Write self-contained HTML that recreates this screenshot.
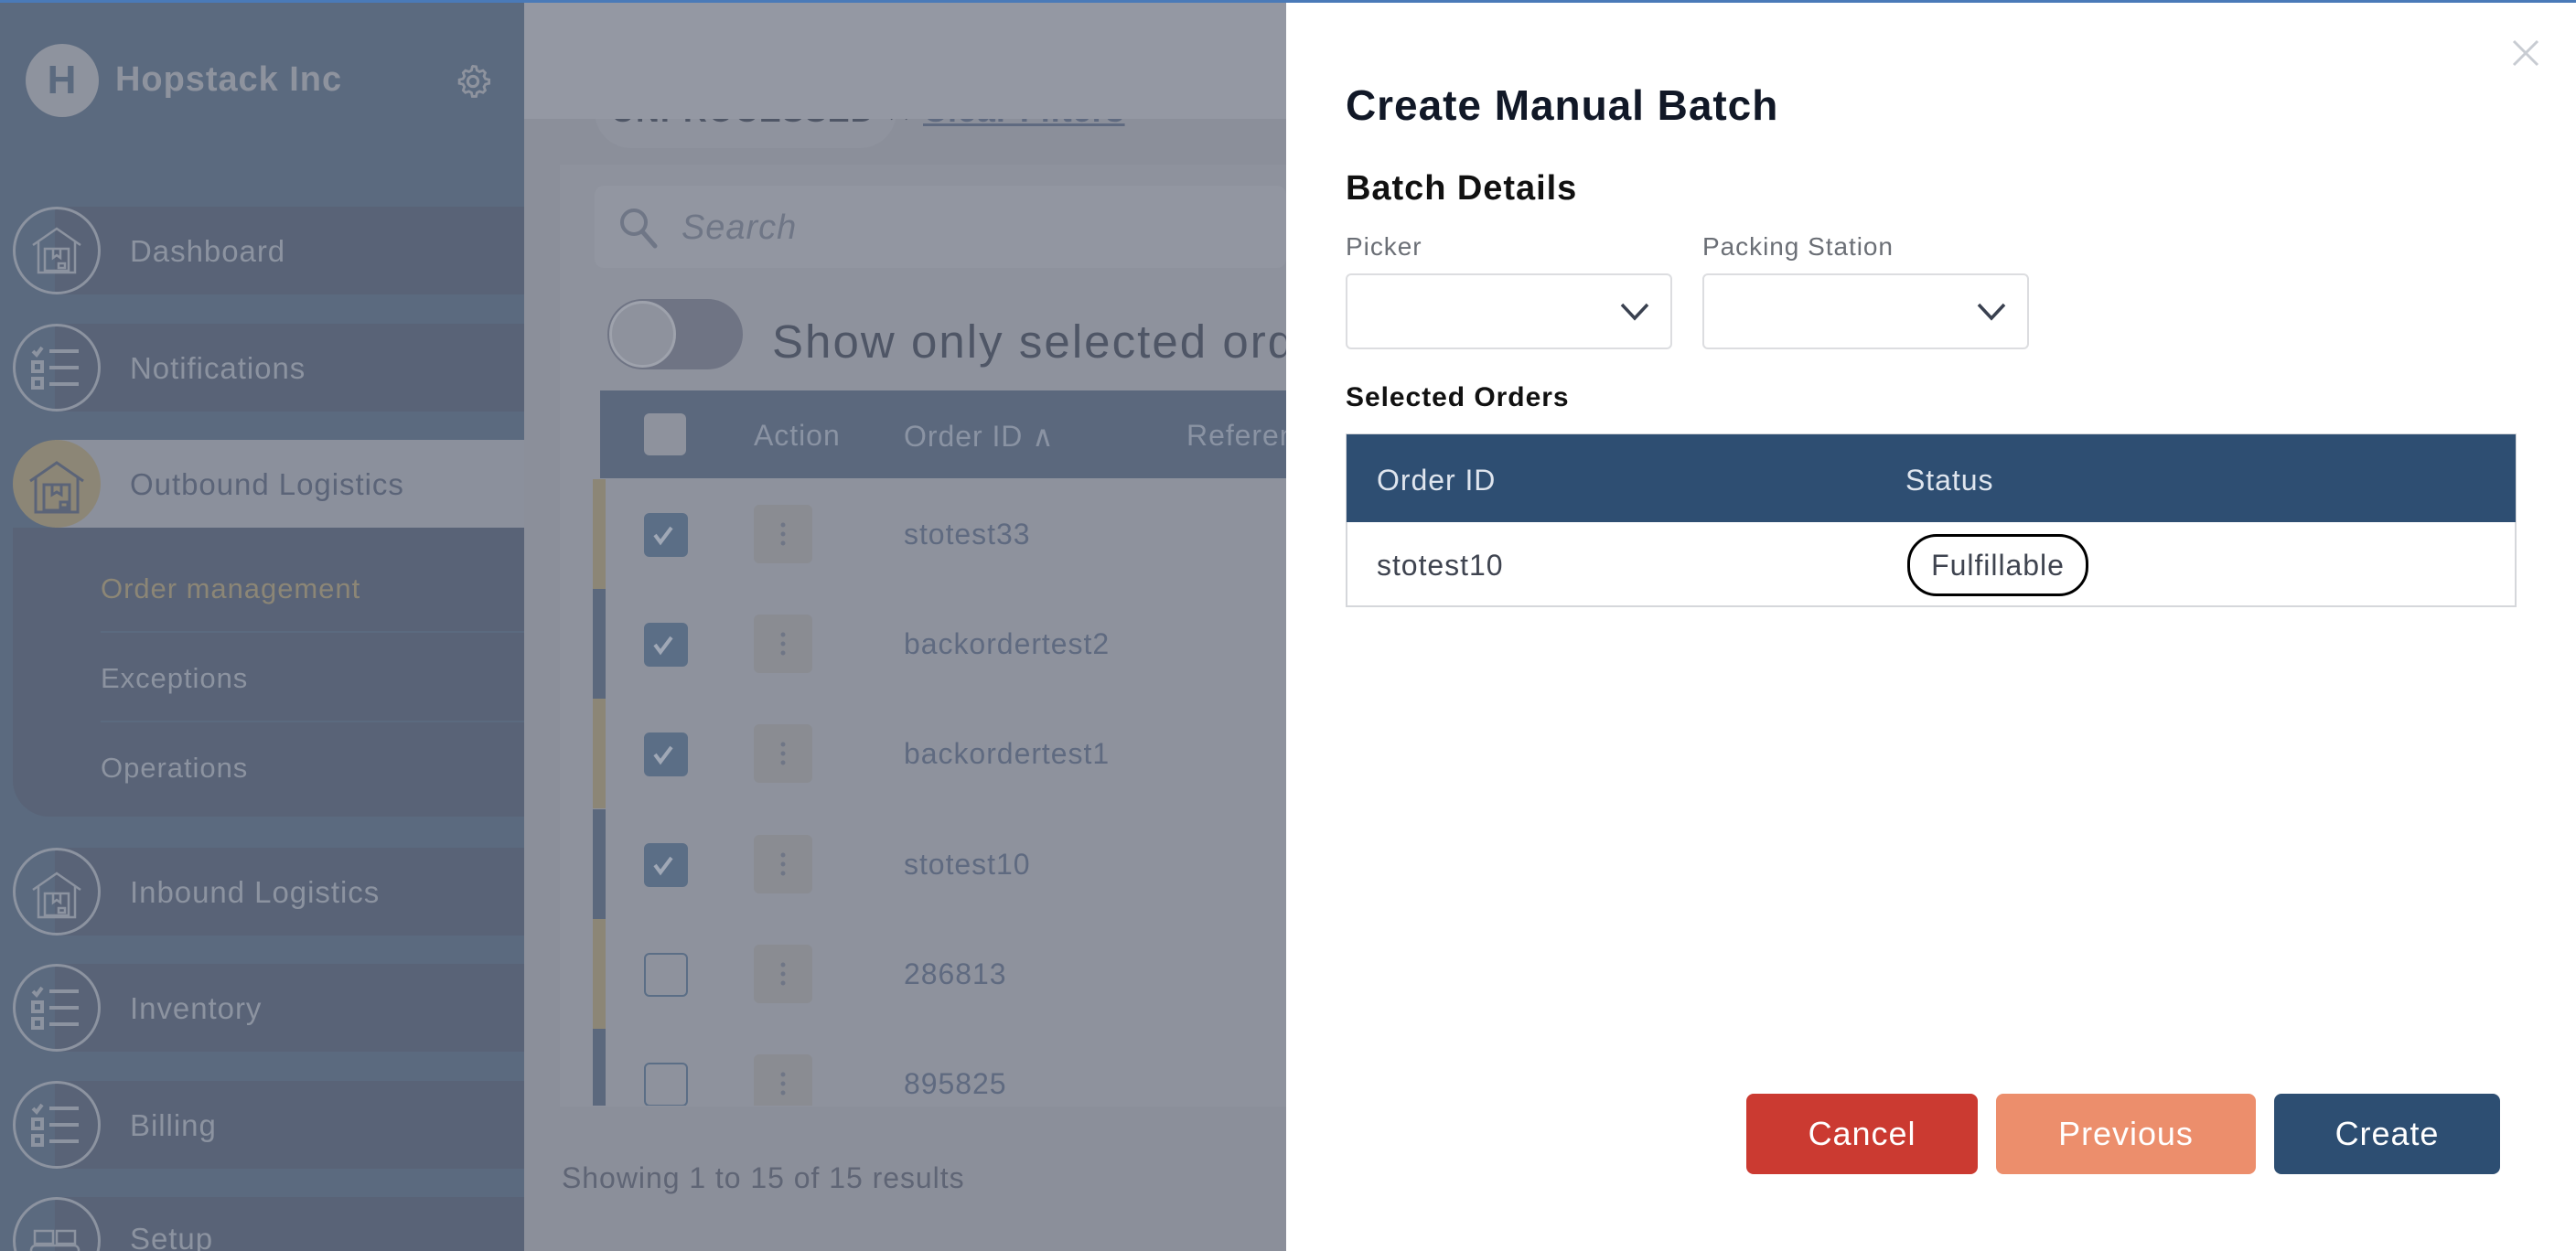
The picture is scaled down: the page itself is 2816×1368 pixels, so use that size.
<!DOCTYPE html>
<html style="width:2816px;height:1368px;overflow:hidden"><head><meta charset="utf-8"><style>
*{margin:0;padding:0;box-sizing:border-box}
body{width:2816px;height:1368px;overflow:hidden;position:relative;background:#8b8f9a;font-family:"Liberation Sans",sans-serif;letter-spacing:0.06em}
#wrap{position:absolute;left:0;top:0;width:2816px;height:1368px;overflow:hidden}
.a{position:absolute}
.side{left:0;top:0;width:573px;height:1368px;background:#5b6a7f;overflow:hidden}
.band{position:absolute;left:60px;width:513px;height:96px;background:#596377}
.circ{position:absolute;left:14px;width:96px;height:96px;border-radius:50%;border:3px solid #8c93a0}
.nt{position:absolute;left:142px;font-size:33px;color:#8c93a0;line-height:1}
.row{position:absolute;left:648px;width:758px;height:120px}
.stripe{position:absolute;left:0;top:0;width:14px;height:120px}
.cb{position:absolute;left:56px;top:37px;width:48px;height:48px;border-radius:6px}
.cb.on{background:#5b6e86}
.cb.off{border:2px solid #5b6e86}
.act{position:absolute;left:176px;top:28px;width:64px;height:64px;border-radius:6px;background:#8a8c92}
.rid{position:absolute;left:340px;top:44px;font-size:32px;color:#5f6a80;line-height:1}
.btn{position:absolute;top:1196px;height:88px;border-radius:8px;color:#fff;font-size:36px;display:flex;align-items:center;justify-content:center}
</style></head><body><div id="wrap">
<div class="a" style="left:0;top:0;width:2816px;height:3px;background:#4a7ab8;z-index:9"></div>
<div class="a" style="left:650px;top:60px;width:330px;height:102px;border-radius:40px;background:#8f939e"></div>
<div class="a" style="left:668px;top:100px;font-size:36px;color:#4f5666;font-weight:bold">UNPROCESSED ✕</div>
<div class="a" style="left:1009px;top:100px;font-size:36px;color:#5f6a80;text-decoration:underline;font-weight:bold">Clear Filters</div>
<div class="a" style="left:573px;top:0;width:833px;height:130px;background:#9498a3;z-index:2"></div>
<div class="a" style="left:612px;top:180px;width:794px;height:1030px;background:#8e929d"></div>
<div class="a" style="left:650px;top:203px;width:756px;height:90px;border-radius:10px;background:#9296a1"></div>
<svg class="a" style="left:676px;top:226px" width="44" height="46" viewBox="0 0 44 46"><circle cx="17" cy="17" r="13" fill="none" stroke="#6f7686" stroke-width="4"/><path d="M26 27L40 43" stroke="#6f7686" stroke-width="5" stroke-linecap="round"/></svg>
<div class="a" style="left:745px;top:228px;font-size:38px;color:#6f7686;font-style:italic">Search</div>
<div class="a" style="left:664px;top:327px;width:148px;height:77px;border-radius:40px;background:#6f7484"></div>
<div class="a" style="left:666px;top:329px;width:73px;height:73px;border-radius:50%;background:#8e929d;border:3px solid #9ea2ac"></div>
<div class="a" style="left:844px;top:344px;font-size:51px;color:#4f5666;white-space:nowrap;letter-spacing:0.04em">Show only selected orders</div>
<div class="a" style="left:656px;top:427px;width:750px;height:96px;background:#5b687d"></div>
<div class="a" style="left:704px;top:452px;width:46px;height:46px;border-radius:6px;background:#8e929d"></div>
<div class="a" style="left:824px;top:458px;font-size:32px;color:#8a93a3">Action</div>
<div class="a" style="left:988px;top:458px;font-size:32px;color:#8a93a3">Order ID ∧</div>
<div class="a" style="left:1297px;top:458px;font-size:32px;color:#8a93a3;white-space:nowrap">Reference</div>

<div class="row" style="top:524px"><div class="stripe" style="background:#8c8676"></div><div class="cb on"></div><div class="act"></div><div class="rid">stotest33</div></div>
<div class="row" style="top:644px"><div class="stripe" style="background:#5b687d"></div><div class="cb on"></div><div class="act"></div><div class="rid">backordertest2</div></div>
<div class="row" style="top:764px"><div class="stripe" style="background:#8c8676"></div><div class="cb on"></div><div class="act"></div><div class="rid">backordertest1</div></div>
<div class="row" style="top:885px"><div class="stripe" style="background:#5b687d"></div><div class="cb on"></div><div class="act"></div><div class="rid">stotest10</div></div>
<div class="row" style="top:1005px"><div class="stripe" style="background:#8c8676"></div><div class="cb off"></div><div class="act"></div><div class="rid">286813</div></div>
<div class="row" style="top:1125px;height:84px;overflow:hidden"><div class="stripe" style="background:#5b687d"></div><div class="cb off"></div><div class="act"></div><div class="rid">895825</div></div>
<div class="a" style="left:614px;top:1270px;font-size:32px;color:#5f6575">Showing 1 to 15 of 15 results</div>

<div class="a side">
 <div class="a" style="left:28px;top:48px;width:80px;height:80px;border-radius:50%;background:#8e939e;color:#5b6a7f;font-size:44px;font-weight:bold;text-align:center;line-height:80px">H</div>
 <div class="a" style="left:126px;top:66px;font-size:38px;font-weight:bold;color:#8e939e">Hopstack Inc</div>
 <svg class="a" style="left:496px;top:68px" width="42" height="42" viewBox="0 0 24 24"><circle cx="12" cy="12" r="3.2" fill="none" stroke="#8e939e" stroke-width="1.8"/><path d="M12 2.5l2 .3.5 2.3 1.6.9 2.2-.8 1.4 1.4-.8 2.2.9 1.6 2.3.5v2.4l-2.3.5-.9 1.6.8 2.2-1.4 1.4-2.2-.8-1.6.9-.5 2.3h-2.4l-.5-2.3-1.6-.9-2.2.8-1.4-1.4.8-2.2-.9-1.6-2.3-.5v-2.4l2.3-.5.9-1.6-.8-2.2 1.4-1.4 2.2.8 1.6-.9.5-2.3z" fill="none" stroke="#8e939e" stroke-width="1.6"/></svg>

 <div class="band" style="top:226px"></div><div class="circ" style="top:226px"></div><div class="nt" style="top:258px">Dashboard</div>
 <div class="band" style="top:354px"></div><div class="circ" style="top:354px"></div><div class="nt" style="top:386px">Notifications</div>
 <div class="a" style="left:14px;top:577px;width:559px;height:316px;background:#596377;border-radius:0 0 0 40px"></div>
 <div class="band" style="top:481px;background:#8b909c"></div><div class="circ" style="top:481px;background:#8c8676;border-color:#8c8676"></div><div class="nt" style="top:513px;color:#5b6478">Outbound Logistics</div>
 <div class="a" style="left:110px;top:626px;font-size:31px;color:#8c8676">Order management</div>
 <div class="a" style="left:110px;top:690px;width:463px;height:2px;background:#5b6a7f"></div>
 <div class="a" style="left:110px;top:724px;font-size:31px;color:#8c93a0">Exceptions</div>
 <div class="a" style="left:110px;top:788px;width:463px;height:2px;background:#5b6a7f"></div>
 <div class="a" style="left:110px;top:822px;font-size:31px;color:#8c93a0">Operations</div>
 <div class="band" style="top:927px"></div><div class="circ" style="top:927px"></div><div class="nt" style="top:959px">Inbound Logistics</div>
 <div class="band" style="top:1054px"></div><div class="circ" style="top:1054px"></div><div class="nt" style="top:1086px">Inventory</div>
 <div class="band" style="top:1182px"></div><div class="circ" style="top:1182px"></div><div class="nt" style="top:1214px">Billing</div>
 <div class="band" style="top:1309px"></div><div class="circ" style="top:1309px"></div><div class="nt" style="top:1338px">Setup</div>
</div>
<svg class="a" style="left:0;top:0" width="120" height="1368">
 <g fill="none" stroke="#8c93a0" stroke-width="2.5">
  <g transform="translate(36,250)"><path d="M0 18L26 0 52 18M6 14V48H46V14"/><rect x="13" y="22" width="26" height="24"/><path d="M22 22v10l4-3 4 3V22"/><rect x="28" y="38" width="7" height="5"/></g>
  <g transform="translate(36,955)"><path d="M0 18L26 0 52 18M6 14V48H46V14"/><rect x="13" y="22" width="26" height="24"/><path d="M22 22v10l4-3 4 3V22"/><rect x="28" y="38" width="7" height="5"/></g>
  <g transform="translate(33,506)" stroke="#5b6478" stroke-width="3"><path d="M0 20L29 0 58 20M6 16V54H52V16"/><rect x="15" y="24" width="28" height="28"/><path d="M24 24v11l5-3 5 3V24"/><rect x="33" y="43" width="8" height="6"/></g>
  <g transform="translate(34,1340)"><rect x="4" y="6" width="20" height="14"/><rect x="28" y="6" width="20" height="14"/><rect x="0" y="22" width="52" height="10" rx="5"/></g>
 </g>
 <g fill="none" stroke="#8c93a0" stroke-width="4">
  <g transform="translate(34,378)"><path d="M2 6l4 4 6-8M20 6h32M20 24h32M20 42h32"/><rect x="2" y="18" width="10" height="10"/><rect x="2" y="36" width="10" height="10"/></g>
  <g transform="translate(34,1078)"><path d="M2 6l4 4 6-8M20 6h32M20 24h32M20 42h32"/><rect x="2" y="18" width="10" height="10"/><rect x="2" y="36" width="10" height="10"/></g>
  <g transform="translate(34,1206)"><path d="M2 6l4 4 6-8M20 6h32M20 24h32M20 42h32"/><rect x="2" y="18" width="10" height="10"/><rect x="2" y="36" width="10" height="10"/></g>
 </g>
</svg>
<svg class="a" style="left:848px;top:0" width="16" height="1368"><g fill="#6f7686">
<circle cx="8" cy="574" r="2.5"/><circle cx="8" cy="584" r="2.5"/><circle cx="8" cy="594" r="2.5"/>
<circle cx="8" cy="694" r="2.5"/><circle cx="8" cy="704" r="2.5"/><circle cx="8" cy="714" r="2.5"/>
<circle cx="8" cy="814" r="2.5"/><circle cx="8" cy="824" r="2.5"/><circle cx="8" cy="834" r="2.5"/>
<circle cx="8" cy="935" r="2.5"/><circle cx="8" cy="945" r="2.5"/><circle cx="8" cy="955" r="2.5"/>
<circle cx="8" cy="1055" r="2.5"/><circle cx="8" cy="1065" r="2.5"/><circle cx="8" cy="1075" r="2.5"/>
<circle cx="8" cy="1175" r="2.5"/><circle cx="8" cy="1185" r="2.5"/><circle cx="8" cy="1195" r="2.5"/></g></svg>
<svg class="a" style="left:700px;top:0" width="60" height="1368"><g fill="none" stroke="#a0a8b6" stroke-width="4"><path d="M16 585l6 8 12-16"/><path d="M16 705l6 8 12-16"/><path d="M16 825l6 8 12-16"/><path d="M16 946l6 8 12-16"/></g></svg>

<div class="a" style="left:1406px;top:0;width:1410px;height:1368px;background:#fff;z-index:5">
 <svg class="a" style="left:1340px;top:43px" width="30" height="30"><path d="M2 2L28 28M28 2L2 28" stroke="#c8ccd2" stroke-width="3"/></svg>
 <div class="a" style="left:65px;top:88px;font-size:46px;font-weight:bold;color:#111827">Create Manual Batch</div>
 <div class="a" style="left:65px;top:185px;font-size:38px;font-weight:bold;color:#111">Batch Details</div>
 <div class="a" style="left:65px;top:254px;font-size:28px;color:#6b6f76">Picker</div>
 <div class="a" style="left:455px;top:254px;font-size:28px;color:#6b6f76">Packing Station</div>
 <div class="a" style="left:65px;top:299px;width:357px;height:83px;border:2px solid #dcdde0;border-radius:6px"></div>
 <div class="a" style="left:455px;top:299px;width:357px;height:83px;border:2px solid #dcdde0;border-radius:6px"></div>
 <svg class="a" style="left:364px;top:330px" width="34" height="22"><path d="M3 3l14 15L31 3" fill="none" stroke="#3a4150" stroke-width="3.5"/></svg>
 <svg class="a" style="left:754px;top:330px" width="34" height="22"><path d="M3 3l14 15L31 3" fill="none" stroke="#3a4150" stroke-width="3.5"/></svg>
 <div class="a" style="left:65px;top:418px;font-size:30px;font-weight:bold;color:#111">Selected Orders</div>
 <div class="a" style="left:65px;top:474px;width:1280px;height:190px;border:2px solid #d5d7db"></div>
 <div class="a" style="left:66px;top:475px;width:1278px;height:96px;background:#2e4e72"></div>
 <div class="a" style="left:99px;top:507px;font-size:32px;color:#dfe5ee">Order ID</div>
 <div class="a" style="left:677px;top:507px;font-size:32px;color:#dfe5ee">Status</div>
 <div class="a" style="left:99px;top:600px;font-size:32px;color:#3f4450">stotest10</div>
 <div class="a" style="left:679px;top:584px;width:198px;height:68px;border:3px solid #000;border-radius:32px;font-size:32px;color:#3f4450;line-height:62px;text-align:center;letter-spacing:0.03em">Fulfillable</div>
 <div class="btn" style="left:503px;width:253px;background:#cb3a31">Cancel</div>
 <div class="btn" style="left:776px;width:284px;background:#ec8e6c">Previous</div>
 <div class="btn" style="left:1080px;width:247px;background:#2d4e72">Create</div>
</div>
</div></body></html>
